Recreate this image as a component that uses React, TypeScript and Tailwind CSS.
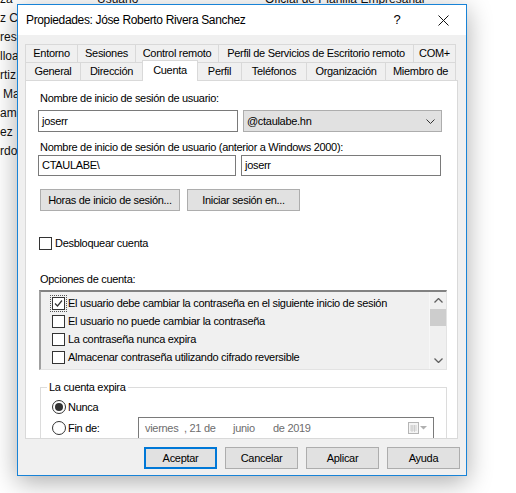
import React from "react";

function Tab({ className, children }: { className: string; children: React.ReactNode }) {
  return (
    <div className={"h-[18px] border-t border-l border-[#d9d9d9] flex items-center justify-center whitespace-nowrap " + className}>
      {children}
    </div>
  );
}

function Check({ checked = false }: { checked?: boolean }) {
  return (
    <div className="w-[13px] h-[13px] border border-[#333333] bg-white flex items-center justify-center shrink-0">
      {checked && (
        <svg width="9" height="9" viewBox="0 0 9 9">
          <polyline points="1,4.5 3.5,7 8,1.5" fill="none" stroke="#333" strokeWidth="1.2" />
        </svg>
      )}
    </div>
  );
}

function Radio({ checked = false }: { checked?: boolean }) {
  return (
    <div className="w-[14px] h-[14px] rounded-full border border-[#333333] bg-white flex items-center justify-center shrink-0">
      {checked && <div className="w-[8px] h-[8px] rounded-full bg-[#333333]" />}
    </div>
  );
}

function Btn({ className, children }: { className: string; children: React.ReactNode }) {
  return (
    <div className={"h-[22px] bg-[#e1e1e1] flex items-center justify-center whitespace-nowrap " + className}>
      {children}
    </div>
  );
}

export default function App() {
  return (
    <div className="relative w-[516px] h-[493px] overflow-hidden bg-white font-['Liberation_Sans',Arial,sans-serif] text-black">
      {/* background window */}
      <div className="flex flex-col mt-[-10px] text-[12px] leading-[19px] text-[#111]">
        <div className="flex">
          <span className="w-[97px]">za</span>
          <span className="w-[168px]">Usuario</span>
          <span>Oficial de Planilla Empresarial</span>
        </div>
        <div className="w-[17px] overflow-hidden whitespace-nowrap">z Ca</div>
        <div className="w-[17px] overflow-hidden whitespace-nowrap">res</div>
        <div className="w-[17px] overflow-hidden whitespace-nowrap">lloa</div>
        <div className="w-[17px] overflow-hidden whitespace-nowrap">rtiz</div>
        <div className="w-[17px] overflow-hidden whitespace-nowrap pl-[3px]">Ma</div>
        <div className="w-[17px] overflow-hidden whitespace-nowrap">ami</div>
        <div className="w-[17px] overflow-hidden whitespace-nowrap">ez</div>
        <div className="w-[17px] overflow-hidden whitespace-nowrap">rdo</div>
      </div>

      {/* dialog */}
      <div className="absolute left-[17px] top-[4px] w-[450px] h-[472px] border border-[#1883d7] bg-[#f0f0f0] shadow-[0_6px_24px_rgba(0,0,0,0.33)] flex flex-col text-[11px] tracking-[-0.3px]">
        {/* title bar */}
        <div className="h-[30px] bg-white flex items-center shrink-0">
          <div className="pl-[8px] text-[12px] tracking-[-0.35px] flex-1">Propiedades: Jóse Roberto Rivera Sanchez</div>
          <div className="w-[46px] h-[30px] flex items-center justify-center text-[13px] tracking-normal">?</div>
          <div className="w-[46px] h-[30px] flex items-center justify-center">
            <svg width="11" height="11" viewBox="0 0 11 11">
              <path d="M0.5 0.5 L10.5 10.5 M10.5 0.5 L0.5 10.5" stroke="#111" strokeWidth="1" />
            </svg>
          </div>
        </div>

        {/* tabs */}
        <div className="pt-[9px] pl-[7px] flex flex-col">
          <div className="flex h-[18px]">
            <Tab className="w-[52px]">Entorno</Tab>
            <Tab className="w-[58px]">Sesiones</Tab>
            <Tab className="w-[83px]">Control remoto</Tab>
            <Tab className="w-[195px]">Perfil de Servicios de Escritorio remoto</Tab>
            <Tab className="w-[43px] border-r">COM+</Tab>
          </div>
          <div className="flex h-[18px] items-start">
            <Tab className="w-[55px]">General</Tab>
            <Tab className="w-[62px]">Dirección</Tab>
            <div className="relative z-10 w-[56px] h-[21px] -mt-[2px] bg-white border-t border-l border-r border-[#d9d9d9] flex items-center justify-center pb-[1px]">
              Cuenta
            </div>
            <Tab className="w-[43px] border-l-0">Perfil</Tab>
            <Tab className="w-[65px]">Teléfonos</Tab>
            <Tab className="w-[79px]">Organización</Tab>
            <Tab className="w-[71px] border-r">Miembro de</Tab>
          </div>
        </div>

        {/* panel */}
        <div className="ml-[7px] w-[433px] h-[359px] shrink-0 border border-[#d9d9d9] bg-white overflow-hidden flex flex-col pl-[12px] pt-[11px]">
          <div className="ml-[2px] h-[13px] leading-[13px]">Nombre de inicio de sesión de usuario:</div>
          <div className="flex gap-[5px] mt-[5px]">
            <div className="w-[200px] h-[22px] border border-[#7a7a7a] bg-white flex items-center pl-[3px]">joserr</div>
            <div className="w-[199px] h-[22px] border border-[#adadad] bg-[#e1e1e1] flex items-center justify-between pl-[3px] pr-[6px]">
              <span>@ctaulabe.hn</span>
              <svg width="9" height="5" viewBox="0 0 9 5">
                <polyline points="0.5,0.5 4.5,4.5 8.5,0.5" fill="none" stroke="#333" strokeWidth="1" />
              </svg>
            </div>
          </div>
          <div className="ml-[2px] mt-[9px] h-[13px] leading-[13px]">Nombre de inicio de sesión de usuario (anterior a Windows 2000):</div>
          <div className="flex gap-[5px] mt-[1px]">
            <div className="w-[198px] h-[21px] border border-[#7a7a7a] bg-white flex items-center pl-[3px]">CTAULABE\</div>
            <div className="w-[200px] h-[21px] border border-[#7a7a7a] bg-white flex items-center pl-[3px]">joserr</div>
          </div>
          <div className="flex gap-[7px] mt-[13px] ml-[2px]">
            <Btn className="w-[140px] border border-[#adadad]">Horas de inicio de sesión...</Btn>
            <Btn className="w-[113px] border border-[#adadad]">Iniciar sesión en...</Btn>
          </div>
          <div className="flex items-center gap-[3px] mt-[26px] ml-[1px] h-[13px]">
            <Check />
            <span>Desbloquear cuenta</span>
          </div>
          <div className="ml-[2px] mt-[23px] h-[13px] leading-[13px]">Opciones de cuenta:</div>
          <div className="ml-[1px] mt-[4px] w-[408px] h-[80px] shrink-0 border-t-2 border-l-2 border-t-[#828282] border-l-[#a0a0a0] border-b border-r border-b-[#e3e3e3] border-r-[#e3e3e3] bg-[#f0f0f0] flex">
            <div className="flex-1 flex flex-col pt-[2px] pl-[11px]">
              <div className="h-[18px] flex items-center gap-[3px]">
                <div className="outline outline-1 outline-dotted outline-[#555] outline-offset-[1px]"><Check checked /></div>
                <span>El usuario debe cambiar la contraseña en el siguiente inicio de sesión</span>
              </div>
              <div className="h-[18px] flex items-center gap-[3px]">
                <Check />
                <span>El usuario no puede cambiar la contraseña</span>
              </div>
              <div className="h-[18px] flex items-center gap-[3px]">
                <Check />
                <span>La contraseña nunca expira</span>
              </div>
              <div className="h-[18px] flex items-center gap-[3px]">
                <Check />
                <span>Almacenar contraseña utilizando cifrado reversible</span>
              </div>
            </div>
            <div className="w-[17px] border-l border-[#f7f7f7] flex flex-col items-center">
              <div className="h-[17px] flex items-center justify-center">
                <svg width="9" height="5" viewBox="0 0 9 5">
                  <polyline points="0.5,4.5 4.5,0.5 8.5,4.5" fill="none" stroke="#606060" strokeWidth="1.3" />
                </svg>
              </div>
              <div className="w-[16px] h-[17px] bg-[#cdcdcd]" />
              <div className="flex-1" />
              <div className="h-[17px] flex items-center justify-center">
                <svg width="9" height="5" viewBox="0 0 9 5">
                  <polyline points="0.5,0.5 4.5,4.5 8.5,0.5" fill="none" stroke="#606060" strokeWidth="1.3" />
                </svg>
              </div>
            </div>
          </div>
          <fieldset className="ml-[2px] mt-[11px] w-[407px] border border-[#dcdcdc] p-0">
            <legend className="ml-[6px] px-[2px] leading-[13px]">La cuenta expira</legend>
            <div className="pl-[11px] pt-[5px] flex flex-col">
              <div className="h-[16px] flex items-center gap-[2px]">
                <Radio checked />
                <span>Nunca</span>
              </div>
              <div className="h-[22px] mt-[2px] flex items-center">
                <div className="w-[86px] flex items-center gap-[2px]">
                  <Radio />
                  <span>Fin de:</span>
                </div>
                <div className="w-[296px] h-[22px] border border-[#7a7a7a] bg-white flex items-center pl-[6px] pr-[5px] text-[#6d6d6d]">
                  <span className="w-[39px]">viernes</span>
                  <span className="w-[49px]">, 21 de</span>
                  <span className="w-[40px]">junio</span>
                  <span className="flex-1">de 2019</span>
                  <svg width="20" height="12" viewBox="0 0 20 12">
                    <rect x="0.5" y="0.5" width="10" height="11" fill="#f4f4f4" stroke="#b5b5b5" />
                    <path d="M2 4 H9 M2 6 H9 M2 8 H9 M4 3 V10 M6.5 3 V10" stroke="#c8c8c8" strokeWidth="0.8" />
                    <polygon points="12,4 19,4 15.5,7.5" fill="#b0b0b0" />
                  </svg>
                </div>
              </div>
            </div>
          </fieldset>
        </div>

        {/* buttons */}
        <div className="flex justify-end gap-[8px] mt-[8px] pr-[6px]">
          <Btn className="w-[73px] h-[21px] border-2 border-[#0078d7]">Aceptar</Btn>
          <Btn className="w-[73px] h-[21px] border border-[#adadad]">Cancelar</Btn>
          <Btn className="w-[73px] h-[21px] border border-[#adadad]">Aplicar</Btn>
          <Btn className="w-[73px] h-[21px] border border-[#adadad]">Ayuda</Btn>
        </div>
      </div>
    </div>
  );
}
